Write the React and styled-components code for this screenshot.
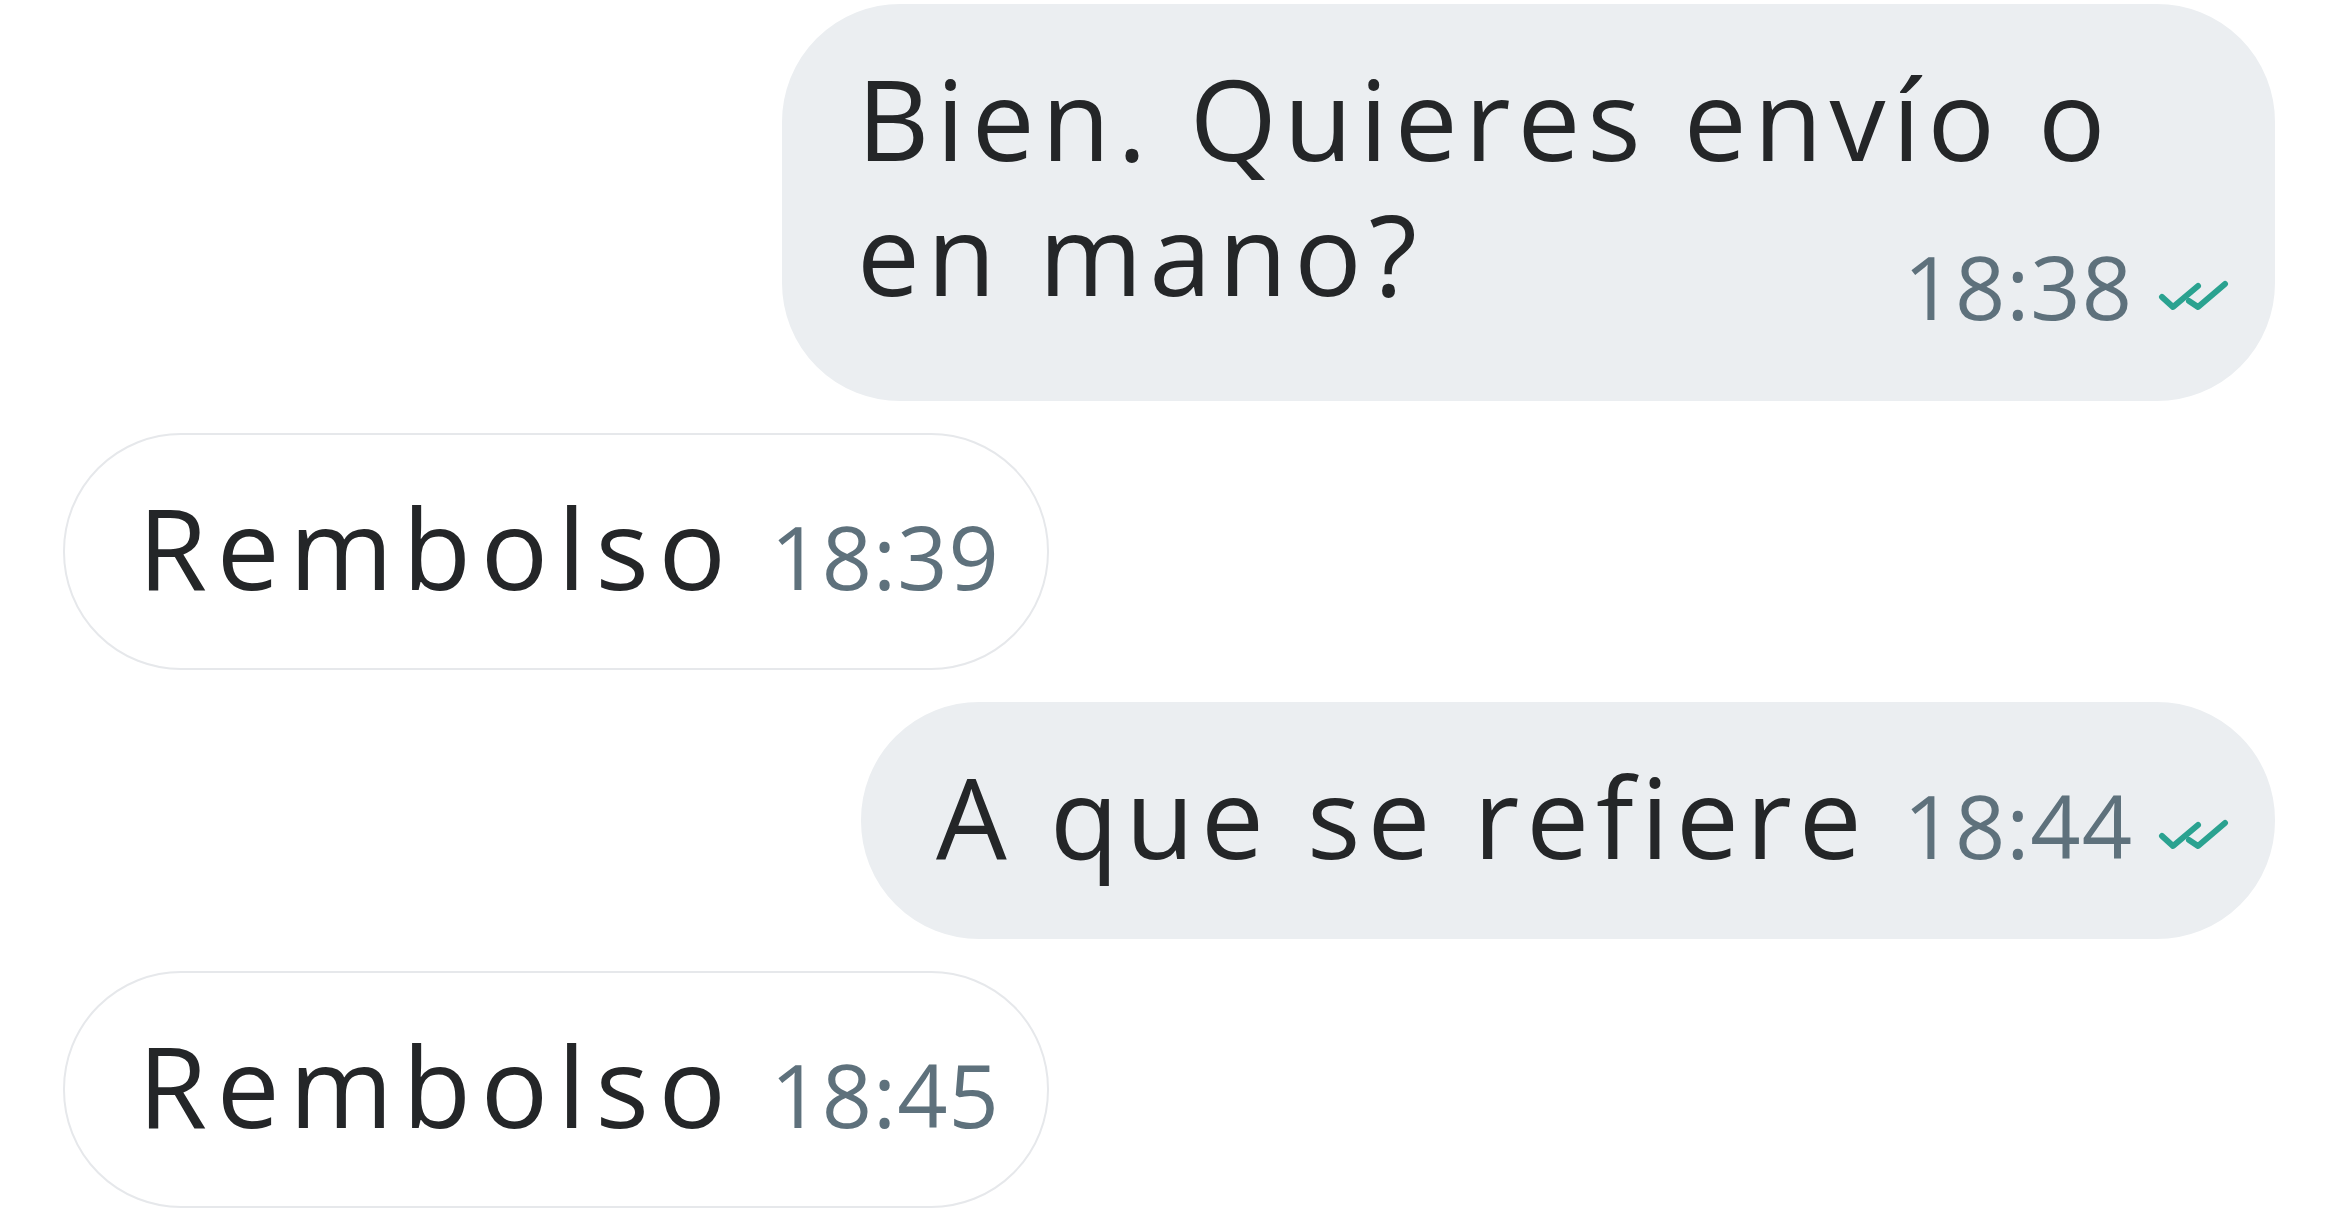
import React from 'react';
import styled, { createGlobalStyle } from 'styled-components';

const GlobalStyle = createGlobalStyle`
  html, body {
    margin: 0;
    padding: 0;
    background: #ffffff;
  }
  body {
    font-family: "Open Sans", Lato, "Liberation Sans", sans-serif;
  }
`;

const Chat = styled.div`
  display: flex;
  flex-direction: column;
  gap: 32px;
  padding: 4px 75px 0 63px;
  width: 2350px;
  box-sizing: border-box;
`;

const Bubble = styled.div`
  box-sizing: border-box;
  display: flex;
  flex-wrap: wrap;
  align-items: baseline;
  justify-content: flex-end;
  column-gap: 35px;
  align-self: ${(p) => (p.$out ? 'flex-end' : 'flex-start')};
  width: ${(p) => (p.$stacked ? '1493px' : 'auto')};
  padding: 44px ${(p) => (p.$out ? '43px' : '47px')} ${(p) => (p.$stacked ? '69px' : '54px')} 73px;
  border-radius: 118px;
  background: ${(p) => (p.$out ? '#ebeef1' : '#ffffff')};
  border: 2px solid ${(p) => (p.$out ? '#ebeef1' : '#e6e8eb')};
`;

const Body = styled.div`
  flex: ${(p) => (p.$stacked ? '0 0 100%' : '0 1 auto')};
  font-size: 112px;
  line-height: 135px;
  color: #242628;
  letter-spacing: ${(p) => (p.$out ? '7px' : '9.6px')};
`;

const Meta = styled.div`
  display: inline-flex;
  align-items: flex-end;
  margin-top: ${(p) => (p.$stacked ? '-78px' : '0')};
`;

const Time = styled.span`
  font-size: 88px;
  line-height: 1;
  color: #5e717c;
  letter-spacing: 1px;
`;

const Ticks = styled.svg`
  width: 72px;
  height: 32px;
  margin-left: 25px;
  margin-bottom: 18px;
  flex: none;
`;

const ReadTicks = () => (
  <Ticks viewBox="0 0 72 32">
    <g fill="none" stroke="#2aa290" strokeWidth="6" strokeLinecap="round" strokeLinejoin="round">
      <polyline points="4,17 15,27 40,6" />
      <polyline points="31,21 40,27 67,4" />
    </g>
  </Ticks>
);

const Message = ({ out, stacked, time, children }) => (
  <Bubble $out={out} $stacked={stacked}>
    <Body $out={out} $stacked={stacked}>{children}</Body>
    <Meta $stacked={stacked}>
      <Time>{time}</Time>
      {out && <ReadTicks />}
    </Meta>
  </Bubble>
);

export default function App() {
  return (
    <>
      <GlobalStyle />
      <Chat>
        <Message out stacked time="18:38">
          Bien. Quieres envío o<br />en mano?
        </Message>
        <Message time="18:39">Rembolso</Message>
        <Message out time="18:44">A que se refiere</Message>
        <Message time="18:45">Rembolso</Message>
      </Chat>
    </>
  );
}
